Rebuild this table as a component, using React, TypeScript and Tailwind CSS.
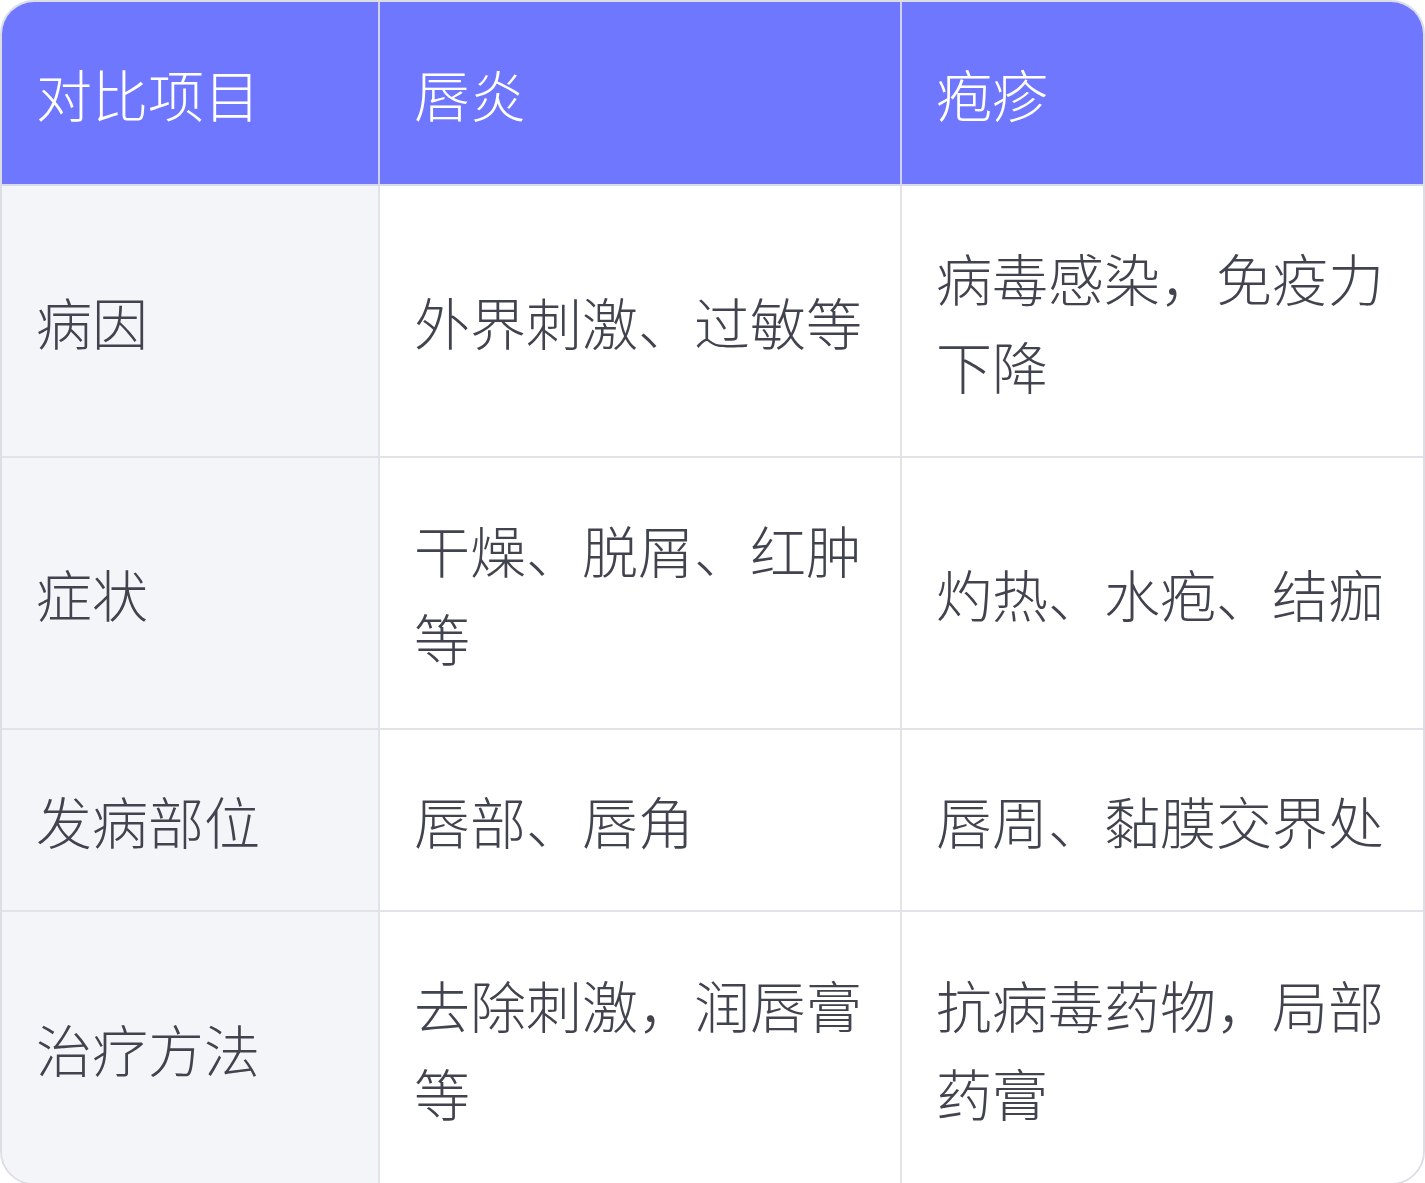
const rows: [string, string, string][] = [
  ['病因', '外界刺激、过敏等', '病毒感染，免疫力下降'],
  ['症状', '干燥、脱屑、红肿等', '灼热、水疱、结痂'],
  ['发病部位', '唇部、唇角', '唇周、黏膜交界处'],
  ['治疗方法', '去除刺激，润唇膏等', '抗病毒药物，局部药膏'],
];

const font = { fontFamily: '"Noto Sans CJK SC", "Noto Sans", sans-serif' };

export default function App() {
  return (
    <div className="w-[1425px] h-[1183px] bg-white" style={font}>
      <div className="overflow-hidden rounded-[34px] border-2 border-[#dcdee5]">
        <table className="w-full table-fixed border-collapse text-[56px] leading-[88px] font-light">
          <colgroup>
            <col className="w-[377px]" />
            <col className="w-[522px]" />
            <col />
          </colgroup>
          <thead>
            <tr className="bg-[#7077ff] text-white">
              {['对比项目', '唇炎', '疱疹'].map((h, i) => (
                <th
                  key={h}
                  className={`h-[183px] px-[34px] py-0 text-left font-light border-b-2 border-[#d9dbe6] ${i > 0 ? 'border-l-2 border-l-[#cfd2e6]' : ''}`}
                >
                  {h}
                </th>
              ))}
            </tr>
          </thead>
          <tbody className="text-[#41444f]">
            {rows.map((r, ri) => (
              <tr key={r[0]} className={ri === 2 ? 'h-[182px]' : 'h-[272px]'}>
                {r.map((c, ci) => (
                  <td
                    key={ci}
                    className={`px-[34px] py-0 align-middle ${ci === 0 ? 'bg-[#f4f5f9]' : 'bg-white border-l-2 border-l-[#e2e3e8]'} ${ri < rows.length - 1 ? 'border-b-2 border-b-[#e2e3e8]' : ''}`}
                  >
                    {c}
                  </td>
                ))}
              </tr>
            ))}
          </tbody>
        </table>
      </div>
    </div>
  );
}
